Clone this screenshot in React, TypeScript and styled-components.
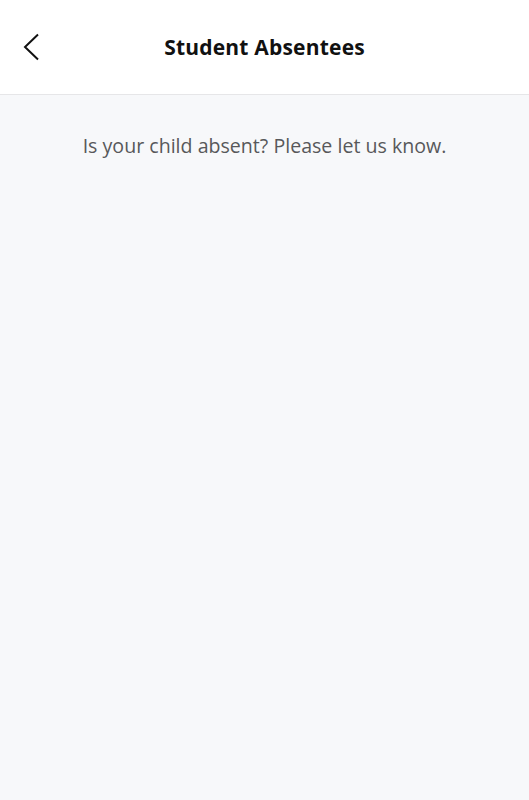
import styled, { createGlobalStyle } from "styled-components";

const Global = createGlobalStyle`
    html, body { margin: 0; padding: 0; }
    body {
        background: #f7f8fa;
        font-family: "Open Sans", "Noto Sans", sans-serif;
    }
`

const Page = styled.div`
    min-height: 800px;
    background: #f7f8fa;
`
const Header = styled.header`
    height: 94px;
    background: #fff;
    border-bottom: 1px solid #e6e6e8;
    display: grid;
    grid-template-columns: 64px 1fr 64px;
    align-items: center;
`
const BackBtn = styled.button`
    background: none;
    border: 0;
    padding: 0 0 0 22px;
    display: flex;
    align-items: center;
    cursor: pointer;
    height: 100%;
`
const Title = styled.h1`
    margin: 0;
    text-align: center;
    font-size: 21px;
    font-weight: 700;
    color: #111;
    letter-spacing: 0.2px;
`
const Intro = styled.p`
    margin: 0;
    padding-top: 37px;
    text-align: center;
    font-size: 19.6px;
    font-weight: 500;
    color: #58585a;
`

export default function App() {
    return (
        <>
            <Global />
            <Page>
                <Header>
                    <BackBtn aria-label="Back">
                        <svg width="18" height="28" viewBox="0 0 18 28" fill="none">
                            <path d="M16 1.5 L3 14 L16 26.5" stroke="#111" strokeWidth="2" />
                        </svg>
                    </BackBtn>
                    <Title>Student Absentees</Title>
                    <div />
                </Header>
                <Intro>Is your child absent? Please let us know.</Intro>
            </Page>
        </>
    )
}
